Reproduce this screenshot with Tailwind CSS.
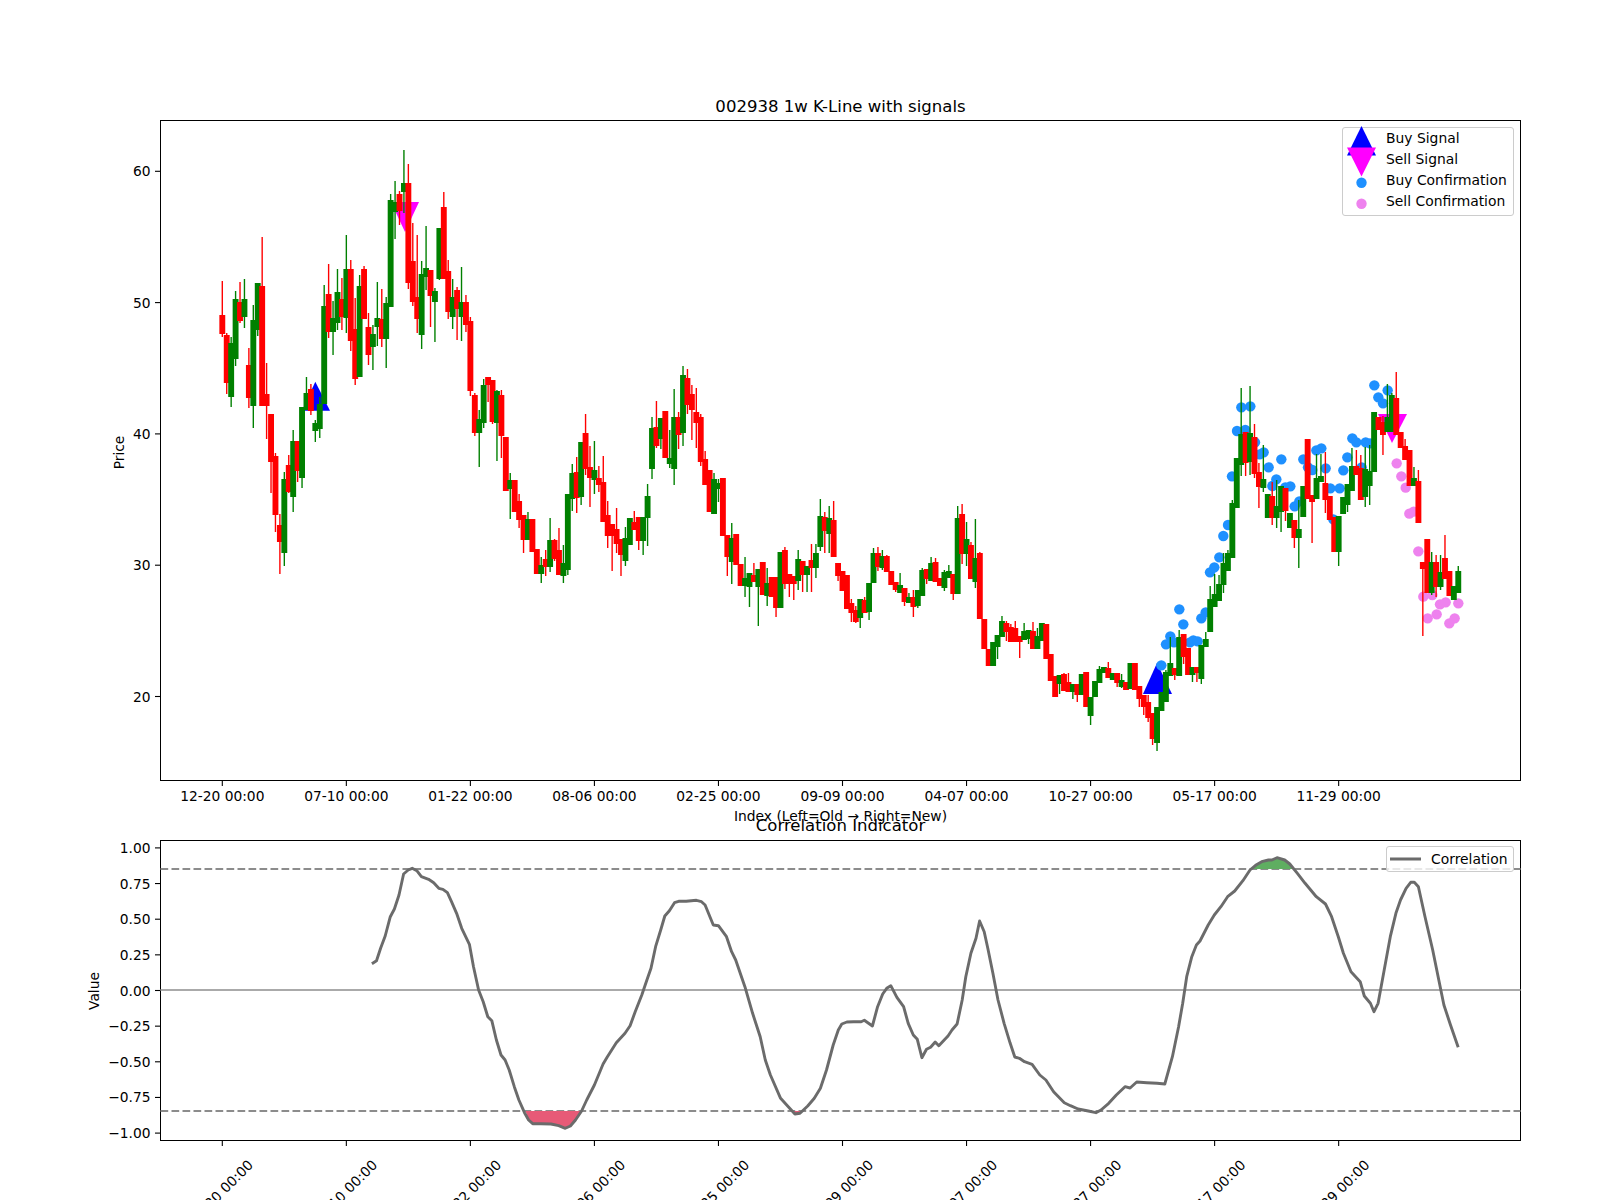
<!DOCTYPE html>
<html lang="en">
<head>
<meta charset="utf-8">
<title>002938 1w K-Line with signals</title>
<script src="https://cdn.jsdelivr.net/npm/@tailwindcss/browser@4"></script>
</head>
<body class="bg-white">
<div class="relative w-[1600px] h-[1200px] overflow-hidden bg-white text-black font-['DejaVu_Sans',sans-serif]">
  <div class="ml-[160px] w-[1361px] flex flex-col">
    <div class="h-[120px] flex items-end justify-center pb-[3px] text-[16.55px] leading-[20px]">002938 1w K-Line with signals</div>

    <div class="relative h-[661px] border border-black">
      <svg id="main" class="absolute -left-px -top-px w-[1361px] h-[661px] overflow-visible text-[13.8px]" viewBox="160 120 1361 661"></svg>
      <div class="absolute left-[1181px] top-[6px] w-[172px] h-[89px] flex flex-col border border-[#cccccc] rounded-[3px] bg-white/80 text-[13.89px] leading-[21px]">
        <div class="flex items-center h-[21px] pl-[4px] gap-[10px]"><svg class="w-[29px] h-[21px] overflow-visible shrink-0" viewBox="0 0 29 21"><polygon points="14.5,-2 0,27.5 29,27.5" fill="#0000ff"/></svg><span>Buy Signal</span></div>
        <div class="flex items-center h-[21px] pl-[4px] gap-[10px]"><svg class="w-[29px] h-[21px] overflow-visible shrink-0" viewBox="0 0 29 21"><polygon points="0,-1.5 29,-1.5 14.5,27.5" fill="#ff00ff"/></svg><span>Sell Signal</span></div>
        <div class="flex items-center h-[21px] pl-[4px] gap-[10px]"><svg class="w-[29px] h-[21px] overflow-visible shrink-0" viewBox="0 0 29 21"><circle cx="14.5" cy="12.8" r="5.2" fill="#1e90ff"/></svg><span>Buy Confirmation</span></div>
        <div class="flex items-center h-[21px] pl-[4px] gap-[10px]"><svg class="w-[29px] h-[21px] overflow-visible shrink-0" viewBox="0 0 29 21"><circle cx="14.5" cy="12.8" r="5.2" fill="#ee82ee"/></svg><span>Sell Confirmation</span></div>
      </div>
    </div>

    <div class="h-[59px] flex flex-col items-center">
      <div class="mt-[27px] h-[16px] text-[13.85px] leading-[16px]">Index (Left=Old → Right=New)</div>
      <div class="-mt-[8px] h-[20px] text-[16.55px] leading-[20px]">Correlation Indicator</div>
    </div>

    <div class="relative h-[301px] border border-black">
      <svg id="sub" class="absolute -left-px -top-px w-[1361px] h-[301px] overflow-visible text-[13.8px]" viewBox="160 840 1361 301"></svg>
      <div class="absolute left-[1225px] top-[6px] w-[128px] h-[26px] flex items-center border border-[#cccccc] rounded-[3px] bg-white/80 text-[13.89px] leading-[21px] pl-[3px] gap-[10px] -translate-y-px">
        <svg class="w-[31px] h-[4px] shrink-0" viewBox="0 0 31 4"><rect y="0.5" width="31" height="3" fill="#6b6b6b"/></svg><span>Correlation</span>
      </div>
    </div>
  </div>
</div>

<script>
const NS = 'http://www.w3.org/2000/svg';
function el(parent, name, attrs, text) {
  const e = document.createElementNS(NS, name);
  for (const k in attrs) e.setAttribute(k, attrs[k]);
  if (text !== undefined) e.textContent = text;
  parent.appendChild(e);
  return e;
}
const main = document.getElementById('main');
const sub = document.getElementById('sub');
const X0 = 222.3, DX = 4.43;

// signal markers
el(main,'polygon',{points:'315.3,381.7 302,410.7 330,410.7',fill:'#0000ff'});
el(main,'polygon',{points:'391,202 419,202 405,232',fill:'#ff00ff'});
el(main,'polygon',{points:'1157,663 1143,694 1172,694',fill:'#0000ff'});
el(main,'polygon',{points:'1378,414 1407,414 1392,443',fill:'#ff00ff'});

// confirmation dots, read in crop coordinates (x = 1100 + X/3, y = 380 + Y/3)
const blue = [[184,856],[198,793],[211,769],[222,787],[238,688],[250,733],[270,787],[280,781],[293,784],[304,715],[317,697],[330,577],[343,562],[358,532],[370,468],[384,435],[396,289],[411,153],[436,150],[424,82],[451,79],[465,187],[479,223],[491,217],[506,262],[517,318],[529,298],[544,238],[556,322],[571,319],[584,379],[598,364],[610,238],[624,262],[637,270],[649,211],[664,205],[677,265],[691,325],[700,418],[719,325],[730,271],[742,232],[757,175],[769,187],[785,262],[797,187],[810,190],[823,16],[835,52],[849,70],[863,31]];
const violet = [[890,250],[904,289],[917,323],[928,401],[941,395],[955,514],[970,650],[997,645],[983,715],[1010,703],[1020,673],[1037,667],[1048,730],[1064,715],[1075,670]];
blue.forEach(p=>el(main,'circle',{cx:1100+p[0]/3,cy:380+p[1]/3,r:5.2,fill:'#1e90ff'}));
violet.forEach(p=>el(main,'circle',{cx:1100+p[0]/3,cy:380+p[1]/3,r:5.2,fill:'#ee82ee'}));

// candles: [green?, bodyTop, bodyBottom, high, low]
const C = [
[0,315,334,281,337],[0,335,383,333,394],[1,343,397,337,407],[1,299,359,291,366],[0,302,321,282,323],[1,299,317,279,328],[0,365,398,348,408],[1,320,406,305,428],[1,283,330,283,336],[0,286,406,237,406],
[0,394,406,363,439],[0,414,462,414,493],[0,456,515,453,532],[0,525,542,514,574],[1,479,553,472,566],[0,465,492,455,493],[1,441,497,430,512],[0,441,471,441,482],[1,407,478,407,488],[1,393,410,377,410],
[0,389,411,384,415],[1,423,431,420,442],[1,404,429,397,438],[1,306,404,285,404],[0,294,332,264,338],[1,318,332,301,355],[1,292,323,269,330],[0,299,317,278,330],[1,269,318,235,333],[0,269,341,260,351],
[0,329,379,298,385],[1,286,377,275,377],[0,269,319,266,319],[0,327,355,313,365],[1,334,347,325,370],[1,318,327,282,346],[0,319,339,289,347],[1,303,339,297,368],[1,200,307,194,307],[1,202,212,181,239],
[0,194,211,191,225],[1,183,192,150,213],[0,183,283,164,289],[0,261,302,223,306],[0,297,319,235,333],[1,274,335,261,349],[1,268,277,226,290],[0,270,296,270,327],[1,291,302,288,342],[1,228,279,228,280],
[0,207,279,192,279],[0,271,312,260,319],[1,297,317,279,329],[0,290,309,287,340],[1,302,317,267,341],[0,302,325,295,332],[0,321,391,317,396],[0,395,433,393,436],[1,419,433,410,467],[1,385,423,379,428],
[0,377,385,377,402],[0,380,422,380,424],[1,391,423,390,461],[0,395,436,390,458],[0,437,491,437,491],[1,480,489,473,519],[0,480,512,480,512],[0,501,520,494,528],[0,515,540,515,553],[1,519,540,512,540],
[0,519,552,519,552],[0,549,574,549,574],[1,565,574,557,583],[0,559,567,550,576],[1,540,567,518,572],[0,540,559,539,561],[0,550,575,528,575],[1,563,576,545,583],[1,494,570,494,575],[1,473,499,464,511],
[0,472,498,457,513],[1,442,497,442,505],[0,433,469,414,475],[0,467,478,446,507],[1,470,480,441,494],[0,478,485,466,492],[0,482,522,456,522],[0,515,536,501,548],[0,524,536,524,571],[0,529,544,508,553],
[0,539,555,539,576],[1,538,561,527,566],[1,518,545,518,545],[0,522,530,511,525],[0,517,541,517,550],[1,517,541,517,555],[1,496,518,484,546],[1,428,469,417,479],[0,427,446,401,448],[1,418,439,418,449],
[0,411,458,411,458],[1,458,464,430,468],[1,417,469,389,485],[0,417,435,412,449],[1,375,433,366,446],[0,378,405,369,414],[0,394,410,385,440],[0,412,423,388,448],[0,417,462,414,466],[0,459,485,451,485],
[0,470,512,470,512],[1,479,514,473,514],[1,483,489,479,502],[0,478,536,478,536],[0,535,557,535,576],[1,538,562,523,584],[0,534,565,534,565],[0,564,586,564,586],[1,578,586,557,597],[1,573,587,573,607],
[0,575,582,563,582],[1,569,587,569,626],[0,562,595,562,595],[1,583,596,568,606],[0,577,597,577,597],[0,577,608,577,617],[1,552,608,552,608],[0,550,584,547,589],[0,574,584,574,597],[0,576,584,576,600],
[1,559,581,550,590],[0,561,575,561,592],[1,566,575,566,592],[0,560,568,544,592],[1,553,568,544,578],[1,516,547,499,551],[0,517,531,512,553],[1,518,534,506,553],[0,520,557,501,557],[0,563,576,563,581],
[0,571,591,571,591],[0,575,609,575,609],[0,603,613,599,622],[0,610,622,606,623],[1,599,618,599,628],[0,600,613,597,613],[1,583,612,583,620],[1,553,583,548,583],[0,553,567,547,571],[1,556,568,550,570],
[0,556,572,555,572],[0,571,585,571,585],[0,582,590,582,592],[1,585,593,573,593],[0,588,602,588,606],[1,597,603,593,603],[0,597,607,590,617],[1,590,606,590,608],[1,570,596,568,596],[0,569,579,569,584],
[1,563,581,557,581],[0,562,582,558,582],[0,578,586,578,586],[1,572,588,570,591],[1,571,578,565,578],[0,574,594,574,600],[1,518,594,506,594],[0,514,554,504,564],[1,539,554,522,566],[0,545,579,542,579],
[1,558,582,519,588],[0,553,619,552,619],[0,619,649,619,649],[0,649,666,649,666],[1,642,666,642,666],[1,635,647,635,659],[1,621,637,616,637],[0,623,632,621,641],[0,627,642,624,642],[0,628,642,621,642],
[0,636,642,636,658],[1,631,640,623,640],[1,630,639,630,644],[0,631,649,622,649],[1,636,649,628,649],[1,623,641,623,641],[0,624,659,624,659],[0,654,681,654,681],[0,676,697,676,697],[1,675,684,675,694],
[0,674,691,673,691],[0,682,692,673,692],[1,684,692,684,699],[0,684,695,684,702],[1,674,695,674,695],[0,672,707,672,707],[1,697,716,697,725],[1,681,697,681,697],[1,669,683,666,683],[1,667,673,667,673],
[0,668,678,662,678],[1,673,680,673,680],[0,673,683,673,687],[1,680,687,674,688],[0,682,690,682,690],[1,663,689,663,689],[0,663,690,663,690],[0,686,699,686,707],[0,695,707,695,715],[0,702,718,695,722],
[0,713,739,713,745],[1,707,743,707,751],[1,692,711,692,711],[1,672,702,670,702],[1,663,676,637,676],[0,668,675,668,680],[1,637,676,630,676],[0,634,657,634,664],[0,648,675,648,675],[1,667,675,667,682],
[0,667,673,667,682],[1,645,679,645,684],[1,639,647,632,647],[1,599,632,586,632],[1,594,607,574,607],[1,584,601,575,601],[1,563,585,553,593],[1,553,571,550,571],[1,503,558,500,558],[1,458,508,458,508],
[1,434,465,388,476],[0,432,463,432,476],[1,433,462,386,475],[0,437,474,424,478],[0,472,487,463,508],[1,479,488,445,492],[1,494,518,494,518],[0,496,518,482,525],[1,506,518,480,528],[1,486,512,486,532],
[0,488,511,488,521],[1,513,528,513,528],[0,520,538,520,548],[1,529,538,500,568],[1,486,517,486,517],[0,439,499,439,499],[0,495,502,495,543],[1,478,499,454,499],[1,476,482,454,482],[0,483,500,452,513],
[0,496,520,496,520],[0,517,552,517,552],[1,516,552,516,566],[1,497,514,497,514],[1,484,505,484,512],[1,466,491,448,491],[0,466,475,450,475],[0,468,500,455,500],[1,469,497,447,507],[1,471,486,445,505],
[1,412,472,412,472],[0,417,430,417,430],[0,422,435,416,455],[1,417,432,384,432],[1,395,432,393,432],[0,398,435,372,435],[0,432,448,432,448],[0,446,460,439,460],[0,450,486,450,486],[1,478,486,467,486],
[0,481,523,470,523],[0,562,569,562,636],[0,539,593,539,593],[1,562,593,552,595],[0,562,587,555,597],[1,572,587,555,590],[0,558,579,535,579],[0,571,596,571,596],[1,586,600,586,600],[1,571,593,566,593]
];
C.forEach((c,i)=>{
  const x = X0 + DX*i, col = c[0] ? '#008000' : '#ff0000';
  el(main,'line',{x1:x,x2:x,y1:c[3],y2:c[4],stroke:col,'stroke-width':1.39});
  el(main,'line',{x1:x,x2:x,y1:c[1],y2:c[2],stroke:col,'stroke-width':5.9});
});

// axis ticks and labels
const dates = ['12-20 00:00','07-10 00:00','01-22 00:00','08-06 00:00','02-25 00:00','09-09 00:00','04-07 00:00','10-27 00:00','05-17 00:00','11-29 00:00'];
function ytick(svg,y,label){
  el(svg,'line',{x1:155,x2:160.5,y1:y,y2:y,stroke:'#000','stroke-width':1.1});
  el(svg,'text',{x:150.5,y:y+5,'text-anchor':'end'},label);
}
[[60,171.3],[50,302.6],[40,433.9],[30,565.2],[20,696.5]].forEach(t=>ytick(main,t[1],String(t[0])));
['1.00','0.75','0.50','0.25','0.00','−0.25','−0.50','−0.75','−1.00'].forEach((l,i)=>ytick(sub,847.9+35.65*i,l));
dates.forEach((d,i)=>{
  const x = X0 + 124.04*i;
  el(main,'line',{x1:x,x2:x,y1:780.5,y2:786,stroke:'#000','stroke-width':1.1});
  el(main,'text',{x:x,y:801,'text-anchor':'middle'},d);
  el(sub,'line',{x1:x,x2:x,y1:1140.5,y2:1146,stroke:'#000','stroke-width':1.1});
  el(sub,'text',{x:x+2,y:1195.5,'text-anchor':'middle',transform:'rotate(-45 '+(x+2)+' 1195.5)'},d);
});
el(main,'text',{x:124,y:452.5,'text-anchor':'middle',transform:'rotate(-90 124 452.5)'},'Price');
el(sub,'text',{x:98.5,y:991,'text-anchor':'middle',transform:'rotate(-90 98.5 991)'},'Value');

// correlation line, read in crop coordinates (x = X/1.96 for the left crop, 800 + X/1.96 for the right, y = 760 + Y/3)
const L1 = [[729,611],[738,602],[746,565],[755,528],[765,470],[773,447],[782,405],[791,342],[800,330],[808,325],[817,332],[826,350],[840,358],[850,368],[860,385],[868,388],[877,398],[885,425],[895,460],[905,505],[920,553],[928,620],[938,690],[947,725],[956,770],[964,782],[973,840],[982,885],[990,900],[998,930],[1008,980],[1017,1020],[1028,1058],[1036,1080],[1044,1091],[1060,1091],[1080,1092],[1095,1097],[1108,1105],[1118,1098],[1128,1080],[1140,1053],[1150,1020],[1165,975],[1182,912],[1190,892],[1208,848],[1225,820],[1235,797],[1245,755],[1258,705],[1268,660],[1276,625],[1285,560],[1295,510],[1303,468],[1312,452],[1322,428],[1330,424],[1345,424],[1365,421],[1375,425],[1382,435],[1398,495],[1408,497],[1424,530],[1434,575],[1442,600],[1460,680],[1475,760],[1490,830],[1500,900],[1510,945],[1530,1015],[1545,1040],[1558,1062]];
const L2 = [[0,1060],[15,1038],[28,1015],[40,985],[52,930],[65,855],[75,810],[82,792],[92,786],[105,785],[120,785],[126,781],[142,798],[152,740],[162,702],[170,685],[178,677],[190,712],[203,740],[212,790],[222,825],[230,838],[239,893],[248,868],[256,862],[265,846],[272,857],[290,828],[298,810],[308,792],[318,720],[325,650],[335,580],[345,535],[352,483],[361,515],[368,565],[378,640],[388,720],[400,790],[412,850],[421,891],[430,895],[440,905],[455,913],[470,945],[482,960],[497,995],[518,1028],[530,1037],[545,1047],[565,1053],[580,1058],[590,1050],[605,1030],[620,1005],[637,980],[647,984],[660,966],[680,968],[700,970],[715,972],[730,890],[742,800],[750,730],[758,650],[768,590],[777,555],[784,543],[800,495],[812,465],[825,440],[838,410],[852,393],[868,362],[882,330],[893,316],[905,305],[918,300],[925,300],[935,293],[950,300],[960,312],[975,340],[990,370],[1012,410],[1030,432],[1042,470],[1055,530],[1065,580],[1080,635],[1098,665],[1106,708],[1118,730],[1125,755],[1133,730],[1145,630],[1157,530],[1168,460],[1177,420],[1188,385],[1197,367],[1204,367],[1212,380],[1225,470],[1240,570],[1252,660],[1262,735],[1275,795],[1290,862]];
const a = p => (p[0]/1.96).toFixed(1)+','+(760+p[1]/3).toFixed(1);
const b = p => (800+p[0]/1.96).toFixed(1)+','+(760+p[1]/3).toFixed(1);
el(sub,'line',{x1:160.5,x2:1520.5,y1:990,y2:990,stroke:'#aaaaaa','stroke-width':2});
[869,1111].forEach(y=>el(sub,'line',{x1:160.5,x2:1520.5,y1:y,y2:y,stroke:'#8c8c8c','stroke-width':2.08,'stroke-dasharray':'7.7 3.3'}));
el(sub,'polygon',{points:[[1030,1053],[1036,1080],[1044,1091],[1060,1091],[1080,1092],[1095,1097],[1108,1105],[1118,1098],[1128,1080],[1140,1053]].map(a).join(' '),fill:'#e75a77'});
el(sub,'polygon',{points:[[1553,1053],[1558,1062],[1568,1060],[1575,1053]].map(a).join(' '),fill:'#e75a77'});
el(sub,'polygon',{points:[[885,327],[893,316],[905,305],[918,300],[925,300],[935,293],[950,300],[960,312],[967,327]].map(b).join(' '),fill:'#5fae61'});
el(sub,'polyline',{points:L1.map(a).concat(L2.map(b)).join(' '),fill:'none',stroke:'#6b6b6b','stroke-width':2.9,'stroke-linejoin':'round'});
</script>
</body>
</html>
